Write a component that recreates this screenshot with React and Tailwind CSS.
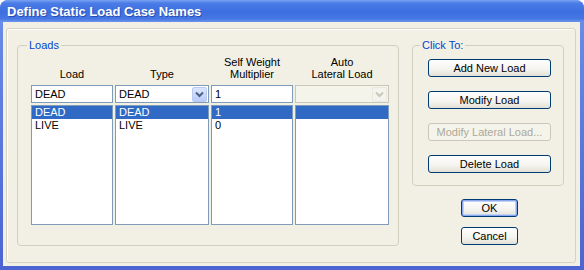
const FONT = { fontFamily: '"Liberation Sans", Arial, sans-serif' };

function Chevron({ disabled }) {
  return (
    <svg width="9" height="7" viewBox="0 0 9 7">
      <path
        d="M1 1.5 L4.5 5 L8 1.5"
        fill="none"
        stroke={disabled ? "#C9C7BA" : "#4D6185"}
        strokeWidth="2"
      />
    </svg>
  );
}

function ComboButton({ disabled }) {
  return (
    <div
      className={`w-[15px] h-[15px] flex items-center justify-center rounded-[2px] border ${
        disabled
          ? "border-[#E8E8E0] bg-[#F4F3EE]"
          : "border-[#B9CBF3] bg-[linear-gradient(to_bottom,#DCE6FD,#BACCF8)]"
      }`}
    >
      <Chevron disabled={disabled} />
    </div>
  );
}

function XpButton({ children, w = "w-[123px]", disabled, isDefault }) {
  if (disabled) {
    return (
      <div className={`${w} h-[18px] rounded-[3px] border border-[#C9C7BA] bg-[#F5F4EA] text-[#ACA899] text-[11px] flex items-center justify-center`}>
        {children}
      </div>
    );
  }
  return (
    <div
      className={`${w} h-[18px] rounded-[3px] border border-[#003C74] bg-[linear-gradient(to_bottom,#FFFFFF,#F4F3EE_60%,#E3E0D6)] text-black text-[11px] flex items-center justify-center ${
        isDefault ? "shadow-[inset_0_0_0_1px_#8AA8EE,inset_0_0_0_2px_#C0D2F7]" : ""
      }`}
    >
      {children}
    </div>
  );
}

const COLUMNS = [
  { header: ["", "Load"], w: "w-[82px]", input: "DEAD", combo: false, rows: ["DEAD", "LIVE"] },
  { header: ["", "Type"], w: "w-[94px]", input: "DEAD", combo: true, rows: ["DEAD", "LIVE"] },
  { header: ["Self Weight", "Multiplier"], w: "w-[82px]", input: "1", combo: false, rows: ["1", "0"] },
  { header: ["Auto", "Lateral Load"], w: "w-[94px]", input: "", combo: true, disabled: true, rows: [""] },
];

function Column({ col }) {
  return (
    <div className={`${col.w} flex flex-col`}>
      {/* Header */}
      <div className="h-[24px] flex flex-col justify-end items-center text-[11px] leading-[12px] text-black">
        {col.header[0] && <div>{col.header[0]}</div>}
        <div>{col.header[1]}</div>
      </div>

      {/* Input / combo */}
      <div
        className={`mt-[5px] h-[18px] border flex items-center justify-between pl-[3px] pr-[1px] text-[11px] ${
          col.disabled ? "border-[#C9C7BA] bg-[#F5F4EA]" : "border-[#7F9DB9] bg-white"
        }`}
      >
        <span>{col.input}</span>
        {col.combo && <ComboButton disabled={col.disabled} />}
      </div>

      {/* List */}
      <div className="mt-[2px] h-[120px] border border-[#7F9DB9] bg-white text-[11px] leading-[13px]">
        {col.rows.map((r, i) => (
          <div
            key={i}
            className={`h-[13px] pl-[3px] ${i === 0 ? "bg-[#316AC5] text-white" : "text-black"}`}
          >
            {r}
          </div>
        ))}
      </div>
    </div>
  );
}

export default function App() {
  return (
    <div className="w-[584px] h-[270px] bg-white" style={FONT}>
      <div className="w-full h-full rounded-t-[8px] bg-[linear-gradient(to_bottom,#6B8FE8,#4B64D2)] flex flex-col overflow-hidden">
        {/* Title bar */}
        <div className="h-[22px] shrink-0 flex items-center pl-[7px] bg-[linear-gradient(to_bottom,#7AA2F2_0%,#4A7BE6_15%,#3C6EE0_55%,#4677E3_85%,#6B96EC_100%)]">
          <span className="text-white font-bold text-[13px] leading-none [text-shadow:1px_1px_0_#2A4CB0]">
            Define Static Load Case Names
          </span>
        </div>

        {/* Body */}
        <div className="flex-1 ml-[3px] mr-[4px] mb-[4px] bg-[#F2F0E4] pt-[6px] pl-[3px] pr-[4px] pb-[3px]">
          <div className="h-full rounded-[3px] border border-[#D6D3C2] shadow-[inset_1px_1px_0_#FFFFFF] flex pl-[10px]">
            {/* Loads group */}
            <div className="relative mt-[16px] w-[382px] h-[201px] rounded-[4px] border border-[#D0D0BF] pl-[13px] pt-[10px]">
              <span className="absolute -top-[7px] left-[9px] px-[2px] bg-[#F2F0E4] text-[11px] leading-[13px] text-[#0046D5]">
                Loads
              </span>
              <div className="flex">
                <Column col={COLUMNS[0]} />
                <div className="w-[2px]" />
                <Column col={COLUMNS[1]} />
                <div className="w-[2px]" />
                <Column col={COLUMNS[2]} />
                <div className="w-[2px]" />
                <Column col={COLUMNS[3]} />
              </div>
            </div>

            {/* Right column */}
            <div className="ml-[13px] mt-[16px] w-[152px] flex flex-col">
              <div className="relative h-[141px] rounded-[4px] border border-[#D0D0BF] pl-[15px] pt-[13px] flex flex-col gap-[14px]">
                <span className="absolute -top-[7px] left-[7px] px-[2px] bg-[#F2F0E4] text-[11px] leading-[13px] text-[#0046D5]">
                  Click To:
                </span>
                <XpButton>Add New Load</XpButton>
                <XpButton>Modify Load</XpButton>
                <XpButton disabled>Modify Lateral Load...</XpButton>
                <XpButton>Delete Load</XpButton>
              </div>

              <div className="mt-[13px] pl-[49px] flex flex-col gap-[10px]">
                <XpButton w="w-[57px]" isDefault>OK</XpButton>
                <XpButton w="w-[57px]">Cancel</XpButton>
              </div>
            </div>
          </div>
        </div>
      </div>
    </div>
  );
}
